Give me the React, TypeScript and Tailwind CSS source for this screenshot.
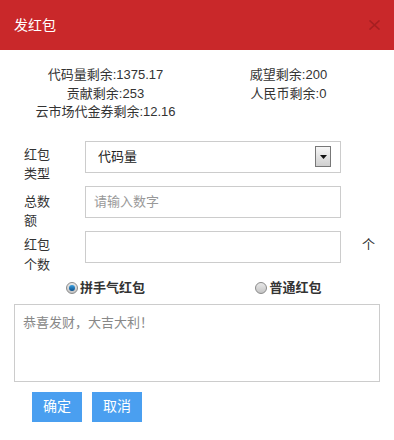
import React from 'react';

const font = 'font-["Liberation_Sans","Noto_Sans_CJK_SC",sans-serif]';

function Radio({ checked }: { checked?: boolean }) {
  return (
    <span className="relative mr-[2px] inline-flex h-[12px] w-[12px] items-center justify-center rounded-full border border-[#8a8a8a] bg-gradient-to-b from-[#e8e8e8] to-[#c4c4c4]">
      {checked && <span className="h-[6px] w-[6px] rounded-full bg-gradient-to-b from-[#3aa0e0] to-[#0b4f8a]" />}
    </span>
  );
}

export default function App() {
  return (
    <div className={`w-[394px] h-[440px] bg-white text-[#333] ${font}`}>
      {/* Header */}
      <div className="h-[50px] bg-[#c9282a] flex items-center justify-between pl-[14px] pr-[13px]">
        <span className="text-[14px] text-white leading-none">发红包</span>
        <svg width="13" height="10" viewBox="0 0 13 10" className="opacity-80">
          <path d="M1.5 0.5 L11.5 9.5 M11.5 0.5 L1.5 9.5" stroke="#9e1d20" strokeWidth="1.6" />
        </svg>
      </div>

      {/* Balances */}
      <div className="mt-[16px] grid grid-cols-2 px-[14px] text-[13px] leading-[18.5px] text-center">
        <div>
          <div>代码量剩余:1375.17</div>
          <div>贡献剩余:253</div>
          <div>云市场代金券剩余:12.16</div>
        </div>
        <div>
          <div>威望剩余:200</div>
          <div>人民币剩余:0</div>
        </div>
      </div>

      {/* Form */}
      <div className="mt-[19px] text-[13px]">
        <div className="flex h-[32px] mb-[13px]">
          <label className="ml-[24px] w-[28px] mt-[4px] leading-[19px]">红包类型</label>
          <div className="ml-[33px] w-[256px] h-[32px] border border-[#ccc] flex items-center justify-between pl-[12px] pr-[9px]">
            <span className="text-[13px] text-[#222]">代码量</span>
            <span className="w-[16px] h-[21px] border border-[#777] bg-gradient-to-b from-[#f7f7f7] to-[#cfcfcf] flex items-center justify-center">
              <svg width="7" height="4" viewBox="0 0 7 4"><path d="M0 0 H7 L3.5 4 Z" fill="#111" /></svg>
            </span>
          </div>
        </div>
        <div className="flex h-[32px] mb-[13px]">
          <label className="ml-[24px] w-[28px] mt-[6px] leading-[19px]">总数额</label>
          <input
            placeholder="请输入数字"
            className="ml-[33px] w-[256px] h-[32px] border border-[#ccc] px-[8px] text-[13px] placeholder:text-[#999] outline-none"
          />
        </div>
        <div className="flex h-[32px]">
          <label className="ml-[24px] w-[28px] mt-[4px] leading-[20px]">红包个数</label>
          <input className="ml-[33px] w-[256px] h-[32px] border border-[#ccc] px-[8px] outline-none" />
          <span className="ml-[21px] mt-[4px] leading-[19px] text-[#333]">个</span>
        </div>

        <div className="mt-[16px] grid grid-cols-2 px-[14px] font-bold leading-[18px]">
          <div className="flex items-center justify-center">
            <Radio checked />
            拼手气红包
          </div>
          <div className="flex items-center justify-center">
            <Radio />
            普通红包
          </div>
        </div>

        <div className="px-[14px] mt-[7px]">
          <textarea
            placeholder="恭喜发财，大吉大利！"
            className="block w-full h-[78px] border border-[#ccc] px-[8px] py-[9px] text-[13px] leading-[18px] placeholder:text-[#888] outline-none resize-none"
          />
        </div>

        <div className="flex gap-[10px] pl-[32px] mt-[10px]">
          <button className="w-[50px] h-[30px] bg-[#4a9ff0] text-white text-[14px]">确定</button>
          <button className="w-[50px] h-[30px] bg-[#4a9ff0] text-white text-[14px]">取消</button>
        </div>
      </div>
    </div>
  );
}
